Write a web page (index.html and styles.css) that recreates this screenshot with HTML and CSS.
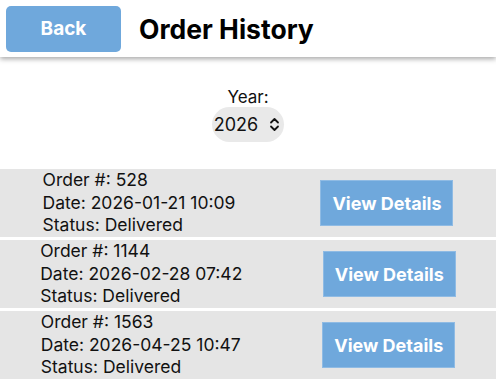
FILE: index.html
```html
<!DOCTYPE html>
<html lang="en">
<head>
    <meta charset="UTF-8">
    <meta name="viewport" content="width=device-width, initial-scale=1.0">
    <title>Order History</title>
    <link rel="stylesheet" href="styles.css">
</head>
<body>
    <div class="header">
        <button class="back-btn">Back</button>
        <h1>Order History</h1>
    </div>

    <div class="year-picker">
        <label for="year">Year:</label>
        <div class="year-select" id="year">
            <span>2026</span>
            <svg width="11" height="15" viewBox="0 0 11 15">
                <path d="M2 5.5 L5.5 2 L9 5.5 M2 9.5 L5.5 13 L9 9.5" fill="none" stroke="#111" stroke-width="1.8" stroke-linecap="round" stroke-linejoin="round"/>
            </svg>
        </div>
    </div>

    <div class="orders">
        <div class="order-row">
            <div class="order-info">
                <div>Order #: 528</div>
                <div>Date: 2026-01-21 10:09</div>
                <div>Status: Delivered</div>
            </div>
            <button class="details-btn">View Details</button>
        </div>
        <div class="order-row">
            <div class="order-info">
                <div>Order #: 1144</div>
                <div>Date: 2026-02-28 07:42</div>
                <div>Status: Delivered</div>
            </div>
            <button class="details-btn">View Details</button>
        </div>
        <div class="order-row">
            <div class="order-info">
                <div>Order #: 1563</div>
                <div>Date: 2026-04-25 10:47</div>
                <div>Status: Delivered</div>
            </div>
            <button class="details-btn">View Details</button>
        </div>
    </div>
</body>
</html>
```

FILE: styles.css
```css
body {
    margin: 0;
    font-family: Inter, "Noto Sans", sans-serif;
    color: #111;
    background-color: white;
}
.header {
    display: flex;
    align-items: center;
    height: 57px;
    padding: 0 6px;
    box-sizing: border-box;
    background-color: white;
    box-shadow: 0 2px 5px rgba(0,0,0,0.35);
}
.back-btn {
    width: 115px;
    height: 46px;
    background-color: #6fa8dc;
    color: white;
    border: none;
    border-radius: 5px;
    font-family: inherit;
    font-size: 19px;
    font-weight: bold;
}
h1 {
    margin: 0 0 0 18px;
    font-size: 26.5px;
    font-weight: bold;
    color: #000;
}
.year-picker {
    display: flex;
    flex-direction: column;
    align-items: center;
    padding-top: 30px;
    height: 112px;
    box-sizing: border-box;
}
.year-picker label {
    font-size: 17px;
    line-height: 20px;
}
.year-select {
    display: flex;
    align-items: center;
    gap: 11px;
    height: 35px;
    padding: 0 4px 0 2px;
    background-color: #e9e9e9;
    border-radius: 18px;
    font-size: 18px;
}
.order-row {
    display: flex;
    justify-content: space-around;
    align-items: center;
    background-color: #e5e5e5;
    height: 68px;
    margin-bottom: 3px;
}
.order-info {
    font-size: 17.5px;
    line-height: 22.5px;
}
.details-btn {
    width: 133px;
    height: 46px;
    background-color: #6fa8dc;
    color: white;
    border: 1px solid #8fbbe4;
    font-family: inherit;
    font-size: 18px;
    font-weight: bold;
}
```
